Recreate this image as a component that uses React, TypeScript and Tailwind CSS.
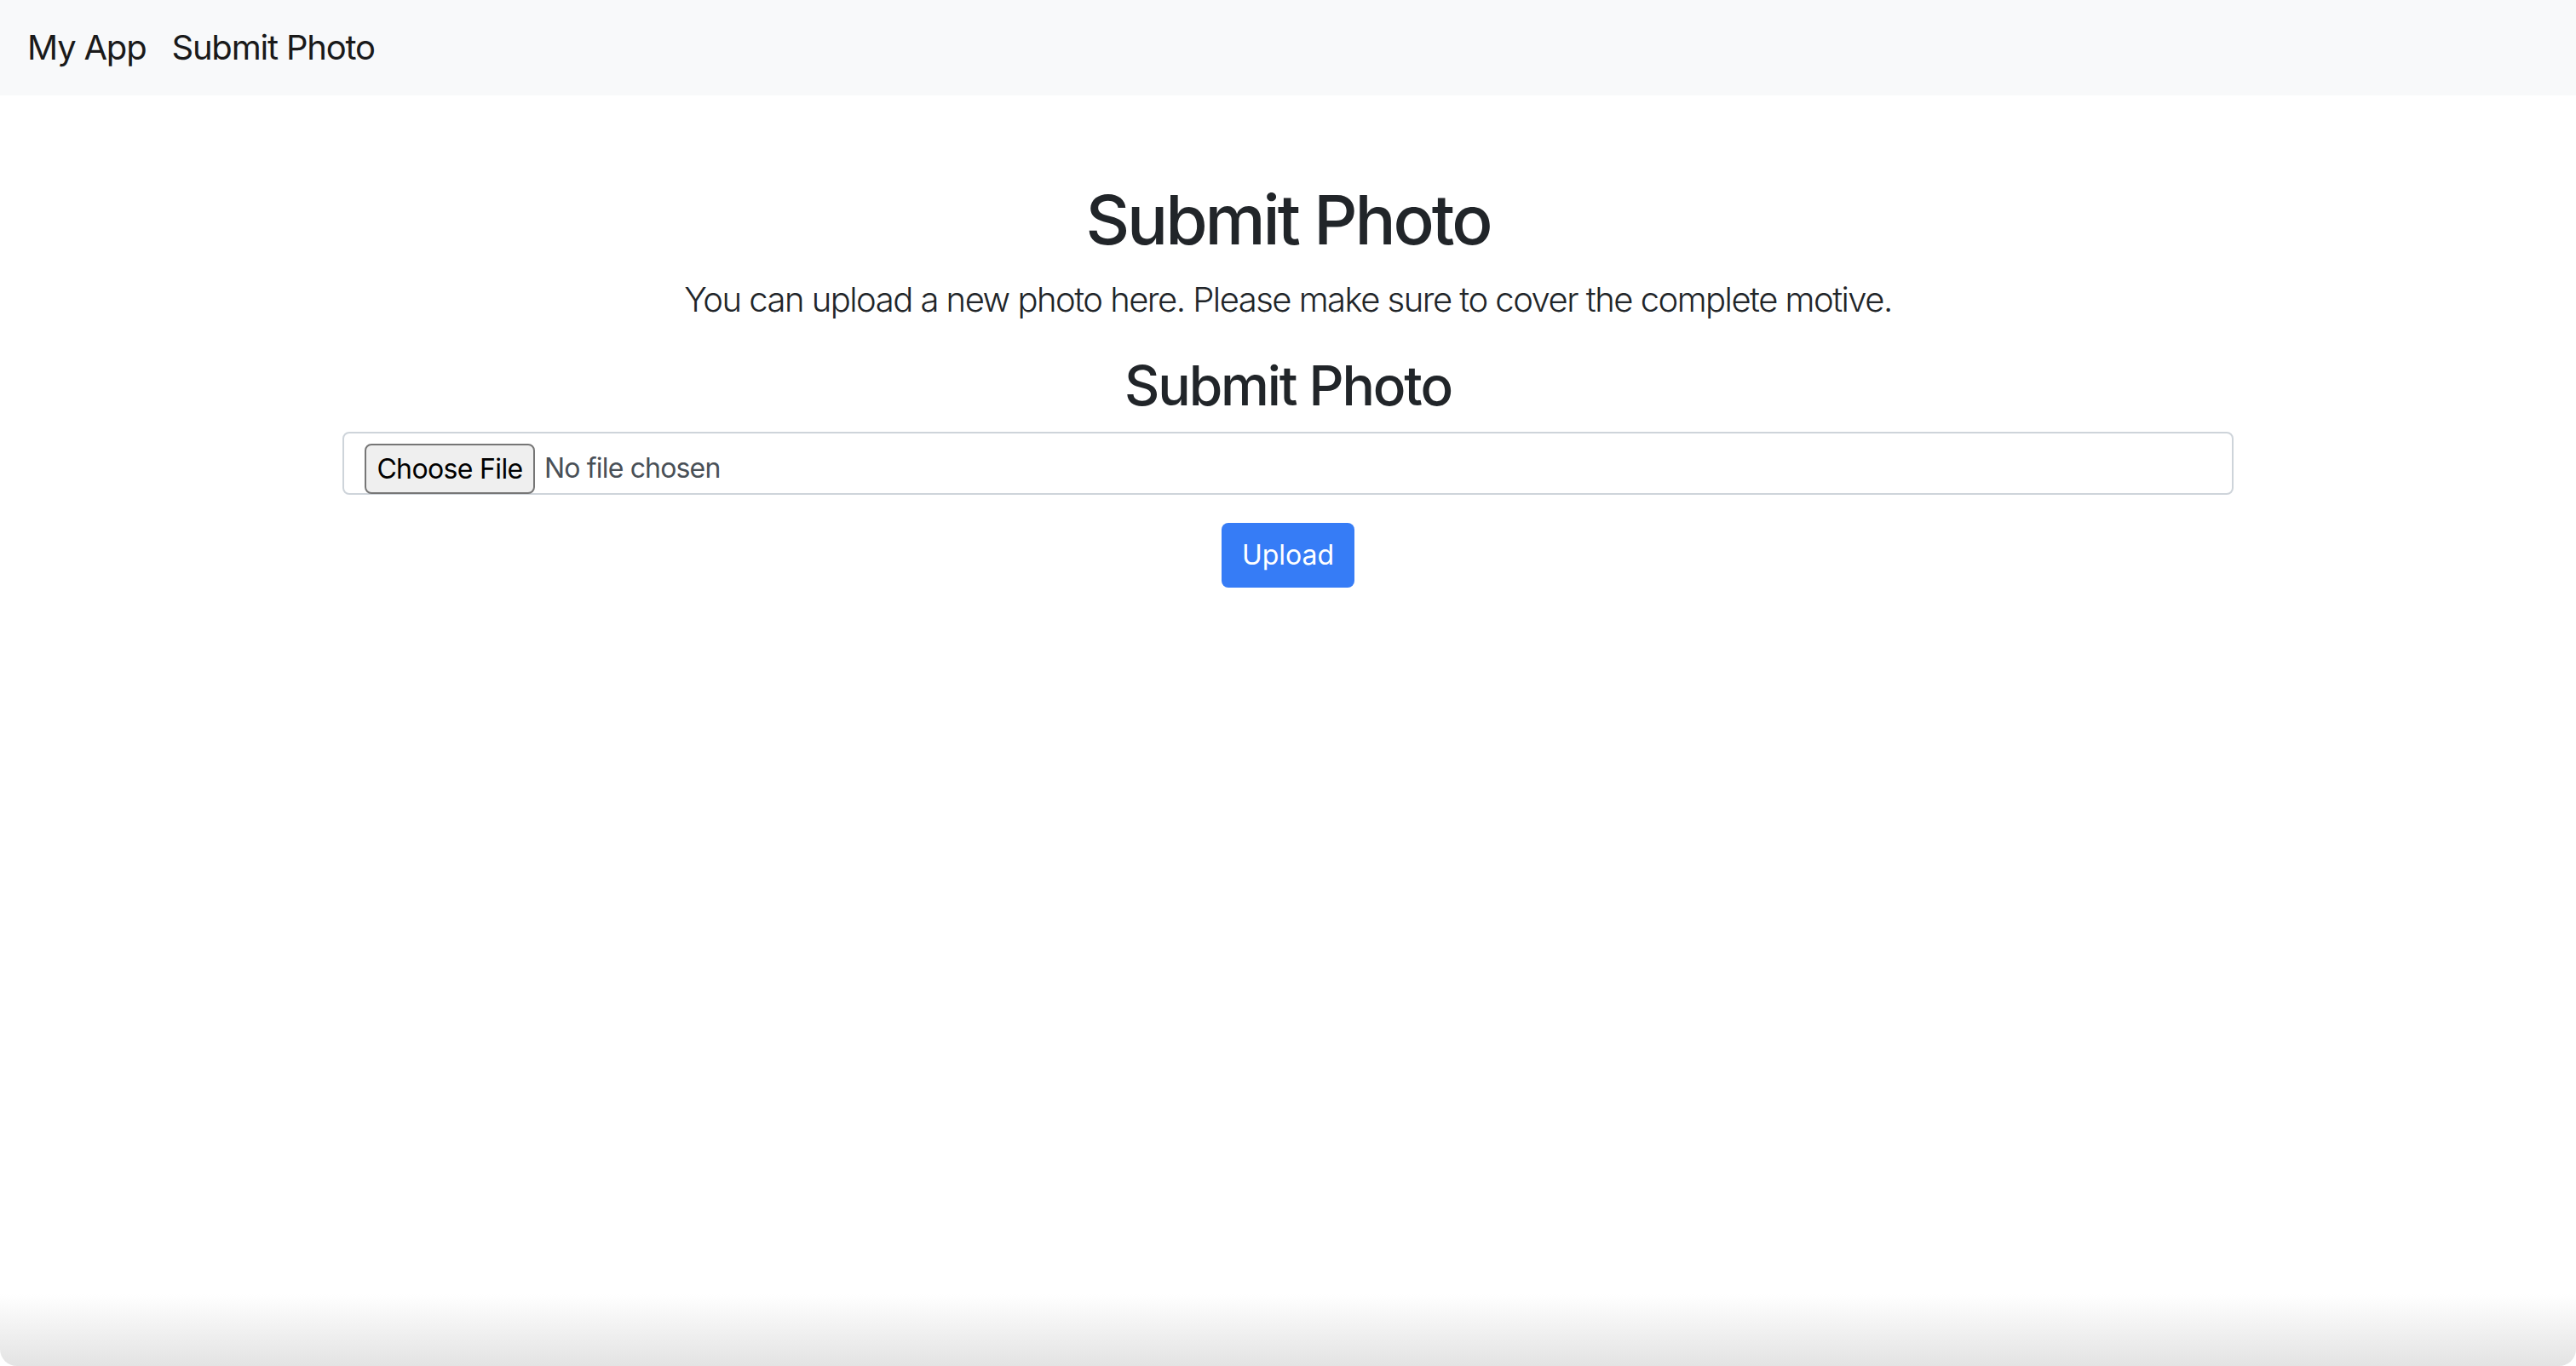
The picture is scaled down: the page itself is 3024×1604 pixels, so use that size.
export default function App() {
    return (
        <div className="flex min-h-screen flex-col bg-white font-['Inter',sans-serif]">
            <nav className="flex h-[112px] items-center gap-[30px] bg-[#f8f9fa] px-[32px] text-[40px] leading-[60px] tracking-[-0.03em] text-[#1a1a1a]">
                <span>My App</span>
                <span>Submit Photo</span>
            </nav>

            <main className="flex-1">
                <div className="mx-auto flex w-[2220px] flex-col items-center pt-[98px] text-[#212529]">
                    <h1 className="mb-[16px] text-[80px] font-medium leading-[96px] tracking-[-0.038em]">Submit Photo</h1>
                    <p className="mb-[32px] text-[40px] font-light leading-[60px] tracking-[-0.038em]">
                        You can upload a new photo here. Please make sure to cover the complete motive.
                    </p>
                    <h2 className="mb-[16px] text-[64px] font-medium leading-[77px] tracking-[-0.033em]">Submit Photo</h2>

                    <div className="flex h-[74px] w-full items-start rounded-[8px] border-2 border-[#ced4da] px-[24px] pt-[12px] text-[32px] leading-[48px]">
                        <button className="h-[59px] w-[200px] shrink-0 rounded-[8px] border-2 border-[#767676] bg-[#efefef] text-[32px] tracking-[-0.02em] text-black">
                            Choose File
                        </button>
                        <span className="ml-[11px] mt-[5px] tracking-[-0.026em] text-[#495057]">No file chosen</span>
                    </div>

                    <button className="mt-[33px] h-[76px] rounded-[8px] bg-[#367cf6] px-[24px] text-[32px] leading-[48px] text-white">
                        Upload
                    </button>
                </div>
            </main>

            <div className="h-[84px] rounded-b-[20px] bg-gradient-to-b from-white to-[#e3e3e3]" />
        </div>
    )
}
